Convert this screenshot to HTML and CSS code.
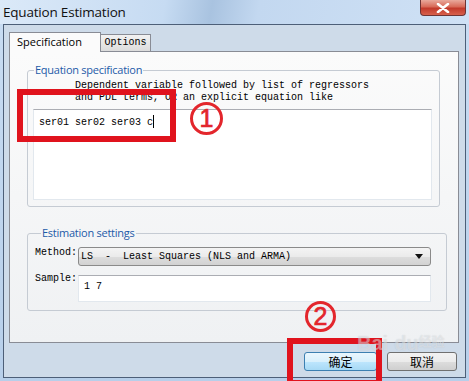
FILE: index.html
```html
<!DOCTYPE html>
<html lang="en">
<head>
    <meta charset="UTF-8">
    <title>Equation Estimation</title>
    <link rel="stylesheet" href="styles.css">
</head>
<body>
    <div class="window">
        <div class="titlebar">
            <span class="title">Equation Estimation</span>
            <span class="close">
                <svg width="14" height="10" viewBox="0 0 14 10">
                    <path d="M2 1 L12 9 M12 1 L2 9" stroke="#fff" stroke-width="2.6" stroke-linecap="round"/>
                </svg>
            </span>
        </div>

        <div class="client">
            <div class="tabs">
                <div class="tab active">Specification</div>
                <div class="tab">Options</div>
            </div>

            <div class="panel">
                <fieldset class="group spec">
                    <legend>Equation specification</legend>
                    <p class="hint">Dependent variable followed by list of regressors<br>and PDL terms, OR an explicit equation like</p>
                    <div class="textarea">ser01 ser02 ser03 c<span class="caret"></span></div>
                </fieldset>

                <fieldset class="group settings">
                    <legend>Estimation settings</legend>
                    <div class="row method">
                        <span class="label">Method:</span>
                        <div class="combo">
                            <span>LS  -  Least Squares (NLS and ARMA)</span>
                            <svg width="8" height="5" viewBox="0 0 8 5"><path d="M0 0 H8 L4 5 Z" fill="#111"/></svg>
                        </div>
                    </div>
                    <div class="row sample">
                        <span class="label">Sample:</span>
                        <div class="input">1 7</div>
                    </div>
                </fieldset>
            </div>

            <div class="buttons">
                <button class="btn default">确定</button>
                <button class="btn">取消</button>
            </div>
        </div>

        <!-- annotations drawn over the dialog -->
        <div class="mark box-one"></div>
        <div class="mark circle circle-one">1</div>
        <div class="mark box-two"></div>
        <div class="mark circle circle-two">2</div>
        <div class="watermark">Bai<span class="paw">du</span><span class="jy">经验</span></div>
    </div>
</body>
</html>
```

FILE: styles.css
```css
body {
    margin: 0;
    font-family: "Open Sans", "Noto Sans CJK SC", sans-serif;
}
.window {
    position: relative;
    width: 469px;
    height: 381px;
    overflow: hidden;
    background: linear-gradient(to bottom, #c9ddf3, #b7cfea);
}
.titlebar {
    height: 24px;
    display: flex;
    align-items: flex-start;
    justify-content: space-between;
    background: linear-gradient(100deg, #dbe9f8 0%, #c6dbf2 35%, #a9c3e0 45%, #c3d8f0 55%, #cfe1f5 100%);
}
.title {
    padding: 3px 0 0 3px;
    font-size: 13.5px;
    color: #111;
    letter-spacing: -0.2px;
}
.close {
    width: 44px;
    height: 15px;
    margin-right: 3px;
    display: flex;
    align-items: center;
    justify-content: center;
    border: 1px solid #6e3434;
    border-top: none;
    border-radius: 0 0 4px 4px;
    background: linear-gradient(to bottom, #e9a99c 0%, #d86a58 45%, #c23a2b 55%, #d7604c 100%);
}
.client {
    margin: 0 3px;
    height: 345px;
    padding: 7px 6px 0 5px;
    border: 1px solid #4d5f78;
    background: #cedbe9;
}
.tabs {
    display: flex;
    align-items: flex-end;
    height: 19px;
}
.tab {
    height: 16px;
    width: 49px;
    border: 1px solid #898c95;
    border-bottom: none;
    border-left: none;
    background: linear-gradient(to bottom, #f2f2f2, #dcdcdc);
    font-family: "Liberation Mono", monospace;
    font-size: 10px;
    line-height: 16px;
    text-align: center;
    color: #000;
}
.tab.active {
    position: relative;
    z-index: 1;
    width: 92px;
    height: 20px;
    margin-bottom: -1px;
    box-sizing: border-box;
    padding-left: 7px;
    border-left: 1px solid #898c95;
    background: #fbfbfb;
    font-family: "Open Sans", sans-serif;
    font-size: 11px;
    line-height: 18px;
    text-align: left;
}
.panel {
    height: 279px;
    padding: 11px 0 0 17px;
    border: 1px solid #898c95;
    background: linear-gradient(to bottom, #fbfbfb, #eff1f3);
}
.group {
    width: 411px;
    margin: 0;
    padding: 0;
    border: 1px solid #c5cbd3;
    border-radius: 3px;
}
.group legend {
    margin-left: 6px;
    padding: 0 1px;
    font-size: 11px;
    line-height: 14px;
    letter-spacing: -0.25px;
    color: #1d5aa8;
}
.hint {
    margin: 3px 0 0 47px;
    font-family: "Liberation Mono", monospace;
    font-size: 10px;
    line-height: 12px;
    color: #000;
}
.textarea {
    margin: 5px 7px 6px 5px;
    height: 84px;
    padding: 5px 0 0 5px;
    border: 1px solid #e2e8ee;
    border-top-color: #abadb3;
    background: #fff;
    font-family: "Liberation Mono", monospace;
    font-size: 10px;
    line-height: 12px;
    white-space: pre;
}
.caret {
    display: inline-block;
    width: 1px;
    height: 13px;
    vertical-align: -3px;
    background: #000;
}
.settings {
    margin-top: 19px;
    padding: 0 0 8px 7px;
}
.row {
    display: flex;
    align-items: flex-start;
    font-family: "Liberation Mono", monospace;
    font-size: 10px;
}
.row .label {
    width: 43px;
    line-height: 12px;
}
.method {
    margin-top: 7px;
}
.sample {
    margin-top: 9px;
}
.sample .label {
    margin-top: -2px;
}
.combo {
    width: 353px;
    height: 19px;
    box-sizing: border-box;
    display: flex;
    align-items: center;
    justify-content: space-between;
    padding: 0 7px 0 2px;
    border: 1px solid #8a8a8a;
    border-radius: 3px;
    background: linear-gradient(to bottom, #f4f4f4 0%, #ebebeb 50%, #dddddd 51%, #d2d2d2 100%);
    white-space: pre;
}
.input {
    width: 353px;
    height: 27px;
    box-sizing: border-box;
    padding: 5px 0 0 5px;
    border: 1px solid #e2e8ee;
    border-top-color: #abadb3;
    background: #fff;
    line-height: 12px;
}
.buttons {
    display: flex;
    justify-content: flex-end;
    gap: 10px;
    margin: 9px 2px 0 0;
}
.btn {
    width: 70px;
    height: 19px;
    padding: 0;
    border: 1px solid #707070;
    border-radius: 3px;
    background: linear-gradient(to bottom, #f2f2f2 0%, #ebebeb 50%, #dddddd 51%, #cfcfcf 100%);
    font-family: "Noto Sans CJK SC", sans-serif;
    font-size: 12px;
    line-height: 17px;
    color: #000;
}
.btn.default {
    width: 73px;
    border-color: #3c7fb1;
    background: linear-gradient(to bottom, #eaf6fd 0%, #d9f0fc 50%, #bee6fd 51%, #a7d9f5 100%);
}
.mark {
    position: absolute;
    box-sizing: border-box;
}
.box-one {
    left: 17px;
    top: 89px;
    width: 159px;
    height: 53px;
    border: 6px solid #e0131d;
}
.box-two {
    left: 287px;
    top: 338px;
    width: 95px;
    height: 48px;
    border: 6px solid #e0131d;
}
.circle {
    border: 3px solid #e3262c;
    border-radius: 50%;
    color: #e3262c;
    font-family: "Liberation Sans", sans-serif;
    font-size: 25px;
    text-align: center;
    -webkit-text-stroke: 0.7px #e3262c;
}
.circle-one {
    left: 190px;
    top: 102px;
    width: 33px;
    height: 33px;
    line-height: 27px;
}
.circle-two {
    left: 305px;
    top: 301px;
    width: 31px;
    height: 31px;
    line-height: 25px;
}
.watermark {
    position: absolute;
    left: 357px;
    top: 331px;
    font-family: "Liberation Sans", sans-serif;
    font-size: 20px;
    line-height: 20px;
    font-weight: bold;
    color: rgba(255, 255, 255, 0.4);
    text-shadow: 0 0 1px rgba(120, 130, 140, 0.3);
}
.watermark .paw {
    margin-left: 6px;
}
.watermark .jy {
    font-family: "Noto Sans CJK SC", sans-serif;
    font-size: 13px;
    vertical-align: 4px;
}
```
